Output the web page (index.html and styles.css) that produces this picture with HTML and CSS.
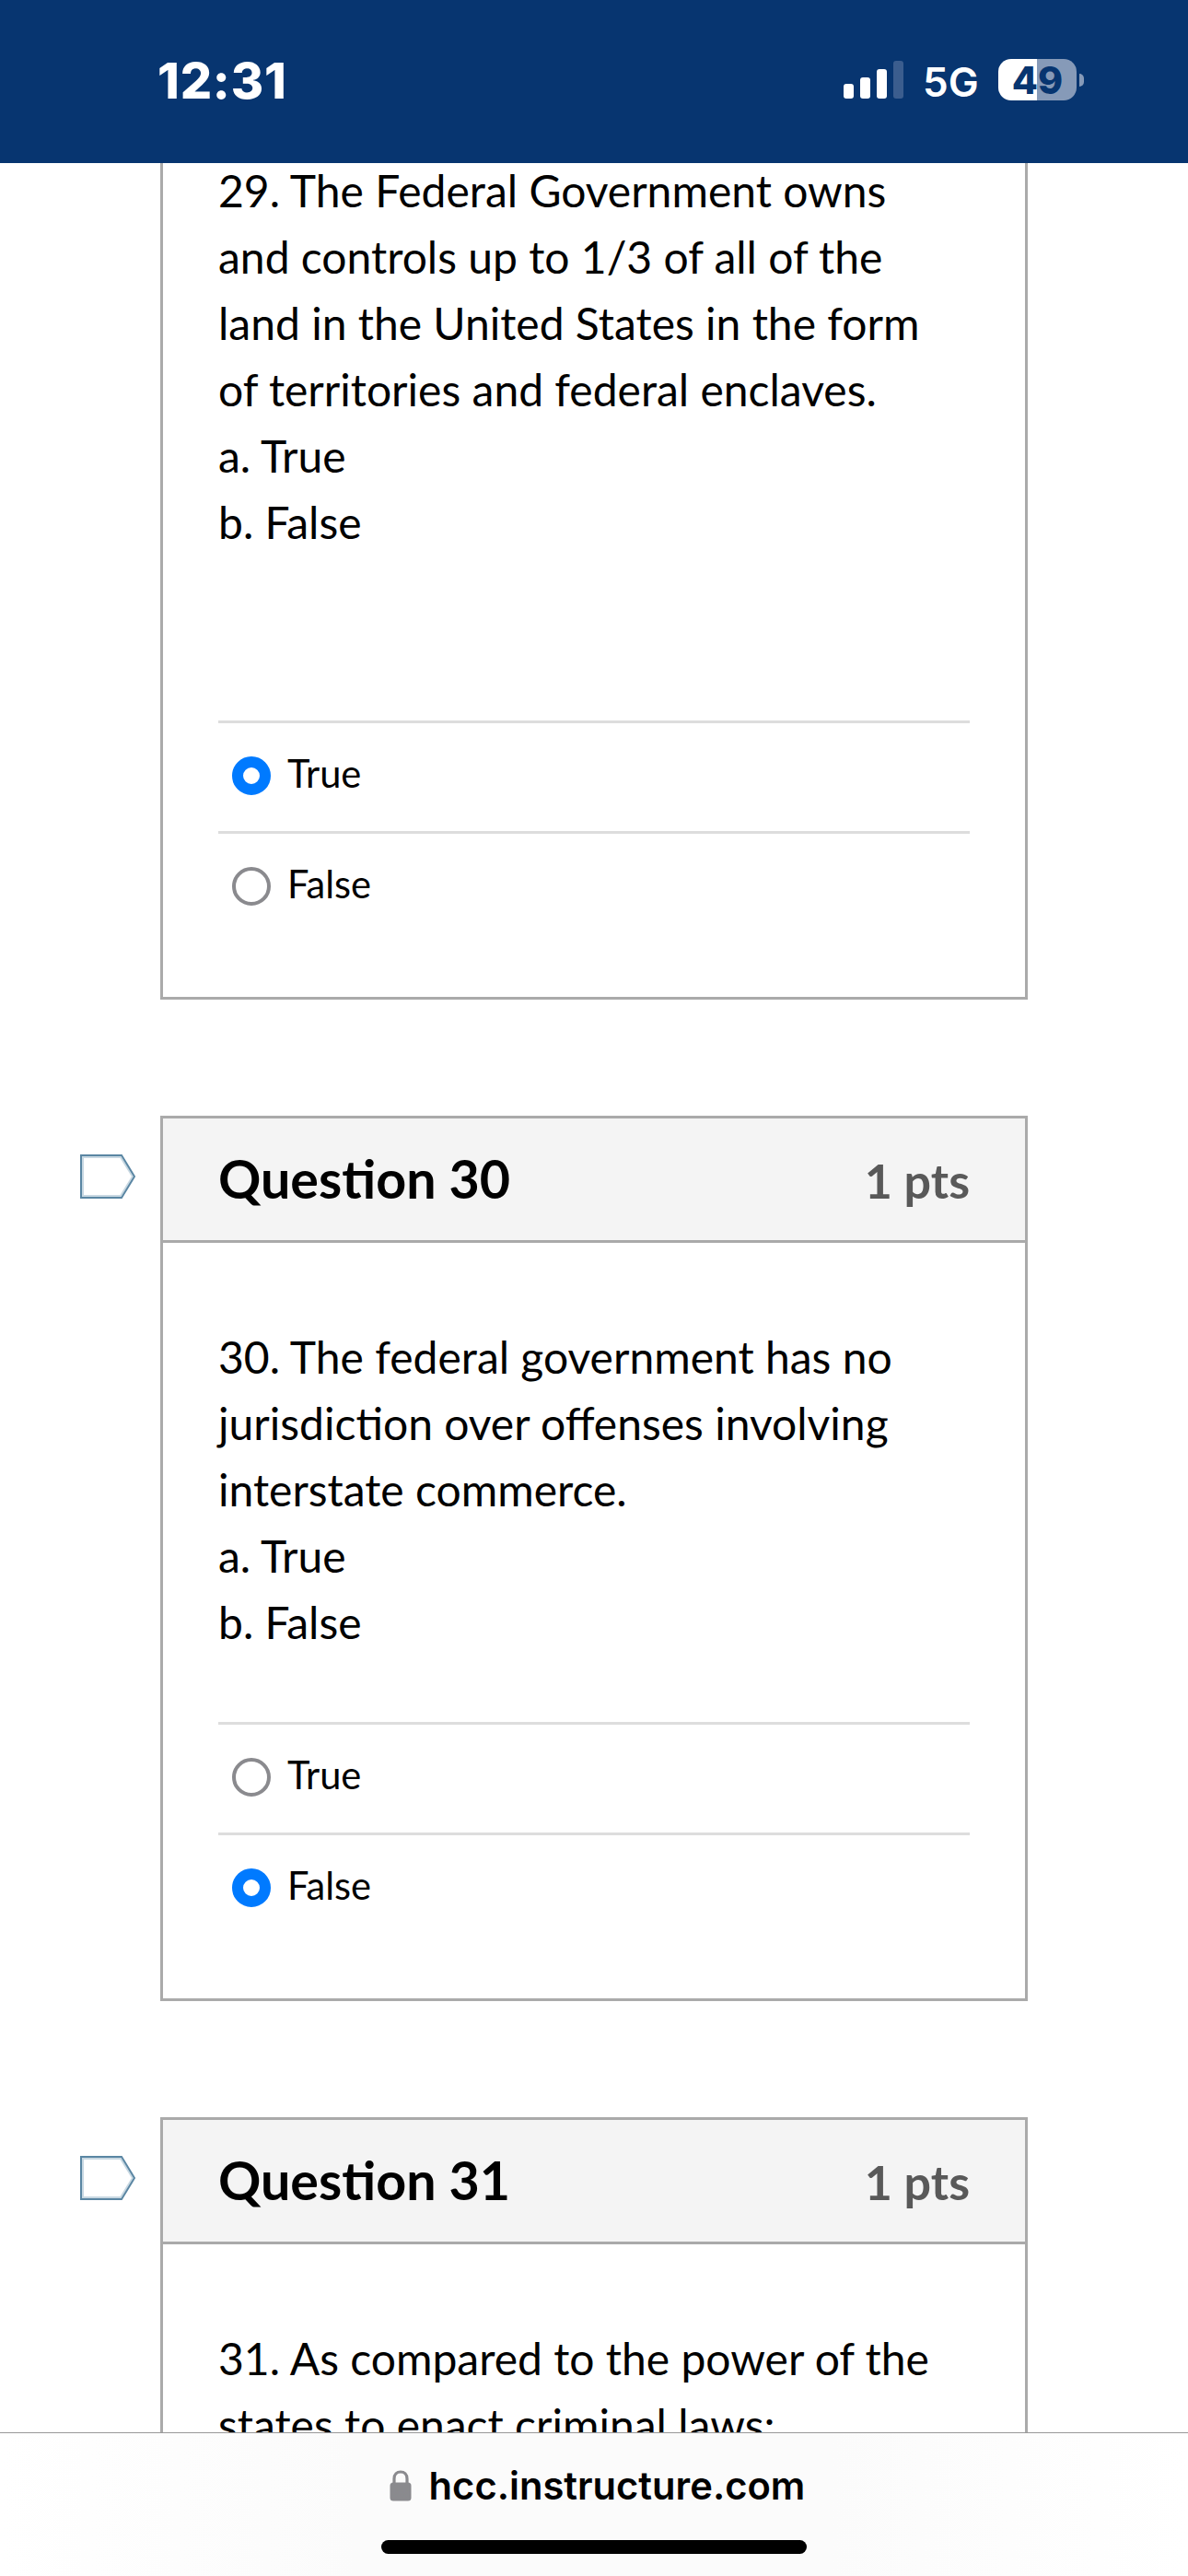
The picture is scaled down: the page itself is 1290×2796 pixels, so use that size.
FILE: index.html
```html
<!DOCTYPE html>
<html lang="en">
	<head>
		<meta charset="UTF-8">
		<title>hcc.instructure.com</title>
		<link rel="stylesheet" href="styles.css">
	</head>
	<body>
		<header class="status">
			<span class="time">12:31</span>
			<div class="status-right">
				<div class="signal">
					<i class="s1"></i><i class="s2"></i><i class="s3"></i><i class="s4"></i>
				</div>
				<span class="network">5G</span>
				<div class="battery">49</div>
				<i class="battery-tip"></i>
			</div>
		</header>

		<main class="quiz">
			<section class="question">
				<div class="card card-first">
					<p class="text">29. The Federal Government owns<br>and controls up to 1/3 of all of the<br>land in the United States in the form<br>of territories and federal enclaves.<br>a. True<br>b. False</p>
					<ul class="answers">
						<li><i class="radio checked"></i><span>True</span></li>
						<li><i class="radio"></i><span>False</span></li>
					</ul>
				</div>
			</section>

			<section class="question">
				<svg class="flag" width="60" height="48" viewBox="0 0 60 48">
					<path class="flag-glow" d="M3 3H44L57 24L44 45H3Z"/>
					<path class="flag-line" d="M1 1H45L59 24L45 47H1Z"/>
				</svg>
				<div class="card">
					<div class="card-head">
						<h2>Question 30</h2>
						<span class="pts">1 pts</span>
					</div>
					<p class="text">30. The federal government has no<br>jurisdiction over offenses involving<br>interstate commerce.<br>a. True<br>b. False</p>
					<ul class="answers">
						<li><i class="radio"></i><span>True</span></li>
						<li><i class="radio checked"></i><span>False</span></li>
					</ul>
				</div>
			</section>

			<section class="question">
				<svg class="flag" width="60" height="48" viewBox="0 0 60 48">
					<path class="flag-glow" d="M3 3H44L57 24L44 45H3Z"/>
					<path class="flag-line" d="M1 1H45L59 24L45 47H1Z"/>
				</svg>
				<div class="card">
					<div class="card-head">
						<h2>Question 31</h2>
						<span class="pts">1 pts</span>
					</div>
					<p class="text">31. As compared to the power of the<br>states to enact criminal laws:</p>
				</div>
			</section>
		</main>

		<footer class="toolbar">
			<div class="address">
				<svg class="lock" width="24" height="34" viewBox="0 0 24 34">
					<path d="M5 15V9.500C5 4.500 8 2 12 2S19 4.500 19 9.500V15" fill="none" stroke="#8a8a8e" stroke-width="3.200"/>
					<rect x="0.500" y="13.500" width="23" height="20" rx="3.500" fill="#8a8a8e"/>
				</svg>
				<span class="url">hcc.instructure.com</span>
			</div>
			<div class="home"></div>
		</footer>
	</body>
</html>
```

FILE: styles.css
```css
*{
	box-sizing: border-box;
}
body,h2,p,ul{
	margin: 0;
	padding: 0;
}
body{
	width: 1290px;
	height: 2796px;
	display: flex;
	flex-direction: column;
	overflow: hidden;
	background: #fff;
	color: #000;
	font-family: Lato, sans-serif;
}
li{
	list-style: none;
}

/* status bar */
.status{
	flex: none;
	height: 177px;
	padding: 0 113px 0 171px;
	display: flex;
	justify-content: space-between;
	align-items: flex-start;
	background: #073570;
	color: #fff;
	font-family: Inter, sans-serif;
}
.time{
	margin-top: 58px;
	font-size: 54px;
	line-height: 60px;
	font-weight: 800;
	letter-spacing: 0.8px;
}
.status-right{
	margin-top: 64px;
	height: 45px;
	display: flex;
	align-items: center;
}
.signal{
	height: 41px;
	margin-right: 21px;
	display: flex;
	align-items: flex-end;
	gap: 7px;
}
.signal i{
	width: 11px;
	border-radius: 3px;
	background: #fff;
}
.signal .s1{ height: 16px; }
.signal .s2{ height: 23px; }
.signal .s3{ height: 32px; }
.signal .s4{
	height: 41px;
	background: #3b5d8e;
}
.network{
	width: 82px;
	padding-top: 4px;
	font-size: 44px;
	line-height: 46px;
	font-weight: 600;
}
.battery{
	width: 85px;
	height: 45px;
	border-radius: 14px;
	background: linear-gradient(to right, #fff 42px, #869ab8 42px);
	color: #073570;
	font-size: 41px;
	line-height: 46px;
	font-weight: 800;
	text-align: center;
}
.battery-tip{
	width: 5px;
	height: 14px;
	margin-left: 3px;
	border-radius: 0 5px 5px 0;
	background: #869ab8;
}

/* questions */
.quiz{
	flex: none;
	height: 2463px;
	overflow: hidden;
}
.question{
	padding: 0 174px 0 87px;
	margin-bottom: 126px;
	display: flex;
	justify-content: flex-end;
}
.flag{
	margin: 42px 27px 0 0;
	fill: none;
}
.flag-line{
	stroke: #5a86a3;
	stroke-width: 2;
}
.flag-glow{
	stroke: #c8d8e2;
	stroke-width: 2;
}
.card{
	width: 942px;
	padding-bottom: 60px;
	border: 3px solid #aaa;
}
.card-first{
	border-top: 0;
}
.card-head{
	height: 135px;
	padding: 0 60px;
	display: flex;
	justify-content: space-between;
	align-items: baseline;
	border-bottom: 3px solid #aaa;
	background: #f4f4f4;
}
.card-head h2{
	font-size: 57.4px;
	line-height: 130px;
	font-weight: 700;
}
.pts{
	color: #595959;
	font-size: 52px;
	font-weight: 700;
}
.text{
	margin: 88px 60px 72px;
	font-size: 48px;
	line-height: 72px;
	white-space: nowrap;
}
.card-first .text{
	margin-top: -6px;
	margin-bottom: 179px;
}
.answers{
	margin: 0 60px;
}
.answers li{
	height: 120px;
	padding-left: 15px;
	display: flex;
	align-items: flex-start;
	border-top: 3px solid #ddd;
	font-size: 41.6px;
	line-height: 60px;
}
.answers span{
	margin: 24px 0 0 18px;
}
.radio{
	width: 42px;
	height: 42px;
	margin-top: 36px;
	border: 4px solid #8a8a8e;
	border-radius: 50%;
}
.checked{
	border: 12px solid #007aff;
}

/* browser toolbar */
.toolbar{
	flex: none;
	height: 156px;
	border-top: 1px solid #999;
	display: flex;
	flex-direction: column;
	align-items: center;
	background: linear-gradient(to right, #fff, #fbfbfb 30%, #fbfbfb 70%, #fff);
}
.address{
	height: 116px;
	padding: 40px 0 0 7px;
	display: flex;
	align-items: flex-start;
}
.lock{
	margin-right: 19px;
}
.url{
	margin-top: -9px;
	font-family: Inter, sans-serif;
	font-size: 41.7px;
	line-height: 52px;
	font-weight: 600;
}
.home{
	width: 462px;
	height: 15px;
	border-radius: 8px;
	background: #000;
}
```
